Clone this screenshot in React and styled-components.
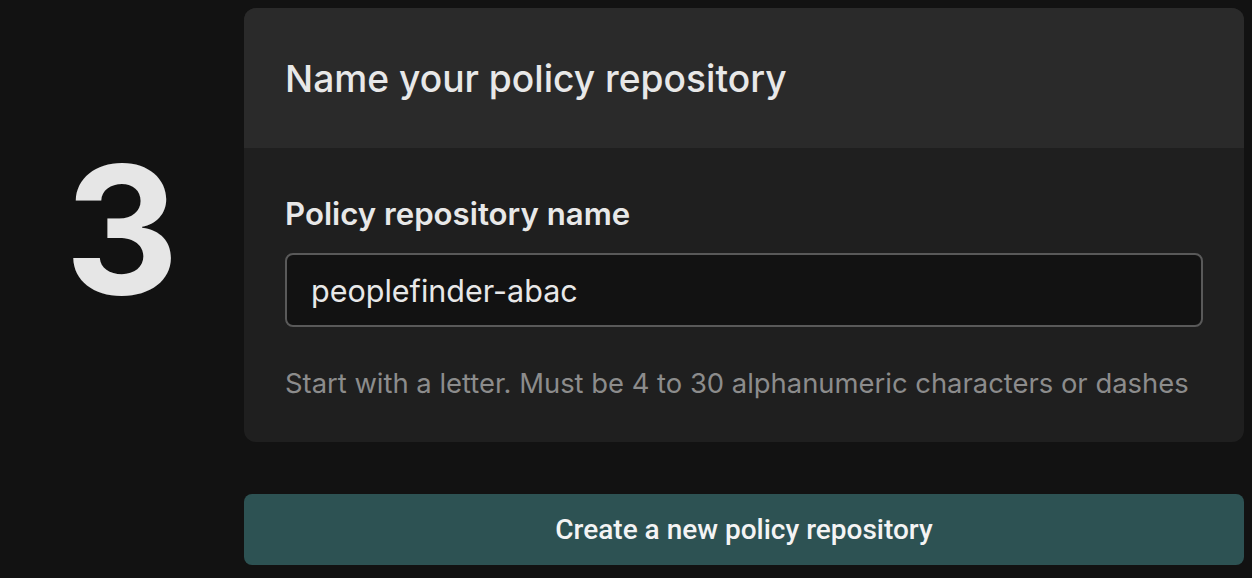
import React from "react";
import styled, { createGlobalStyle } from "styled-components";

const Global = createGlobalStyle`
  html, body { margin: 0; padding: 0; background: #121212; }
  body { font-family: Inter, "Noto Sans", sans-serif; color: #e8e8e8; }
  * { box-sizing: border-box; }
`;

const Page = styled.div`
  display: grid;
  grid-template-columns: 236px 1000px;
  padding: 8px;
  min-height: 578px;
`;

const StepNumber = styled.div`
  display: flex;
  justify-content: center;
  align-items: flex-start;
  padding-top: 122px;
  padding-right: 8px;
  font-family: Inter, sans-serif;
  font-weight: 700;
  font-size: 177px;
  line-height: 200px;
  color: #e6e6e6;
  height: 433px;
`;

const Main = styled.div`
  display: flex;
  flex-direction: column;
  gap: 52px;
`;

const Card = styled.section`
  border-radius: 12px;
  overflow: hidden;
  background: #1f1f1f;
`;

const CardHeader = styled.header`
  height: 140px;
  background: #2a2a2a;
  display: flex;
  align-items: center;
  padding: 0 41px;
`;

const Title = styled.h2`
  margin: 0;
  font-family: Inter, sans-serif;
  font-weight: 500;
  font-size: 37.2px;
  color: #e8e8e8;
`;

const CardBody = styled.div`
  padding: 46px 41px 41px;
  display: flex;
  flex-direction: column;
`;

const Label = styled.label`
  font-family: Inter, sans-serif;
  font-weight: 600;
  font-size: 31.2px;
  line-height: 40px;
  color: #e8e8e8;
  margin-bottom: 19px;
`;

const Input = styled.input`
  width: 100%;
  height: 74px;
  background: #121212;
  border: 2px solid #595959;
  border-radius: 8px;
  padding: 0 24px;
  font-family: Inter, sans-serif;
  font-size: 30.5px;
  color: #e8e8e8;
  outline: none;
`;

const Help = styled.p`
  margin: 38px 0 0;
  font-family: Inter, sans-serif;
  font-size: 27.4px;
  line-height: 36px;
  color: #8c8c8c;
`;

const Button = styled.button`
  height: 71px;
  width: 100%;
  border: none;
  border-radius: 8px;
  background: #2d5253;
  color: #f4f4f4;
  font-family: Roboto, sans-serif;
  font-weight: 500;
  font-size: 28px;
  cursor: pointer;
`;

export default function App() {
  return (
    <>
      <Global />
      <Page>
        <StepNumber>3</StepNumber>
        <Main>
          <Card>
            <CardHeader>
              <Title>Name your policy repository</Title>
            </CardHeader>
            <CardBody>
              <Label htmlFor="repo">Policy repository name</Label>
              <Input id="repo" defaultValue="peoplefinder-abac" />
              <Help>Start with a letter. Must be 4 to 30 alphanumeric characters or dashes</Help>
            </CardBody>
          </Card>
          <Button>Create a new policy repository</Button>
        </Main>
      </Page>
    </>
  );
}
